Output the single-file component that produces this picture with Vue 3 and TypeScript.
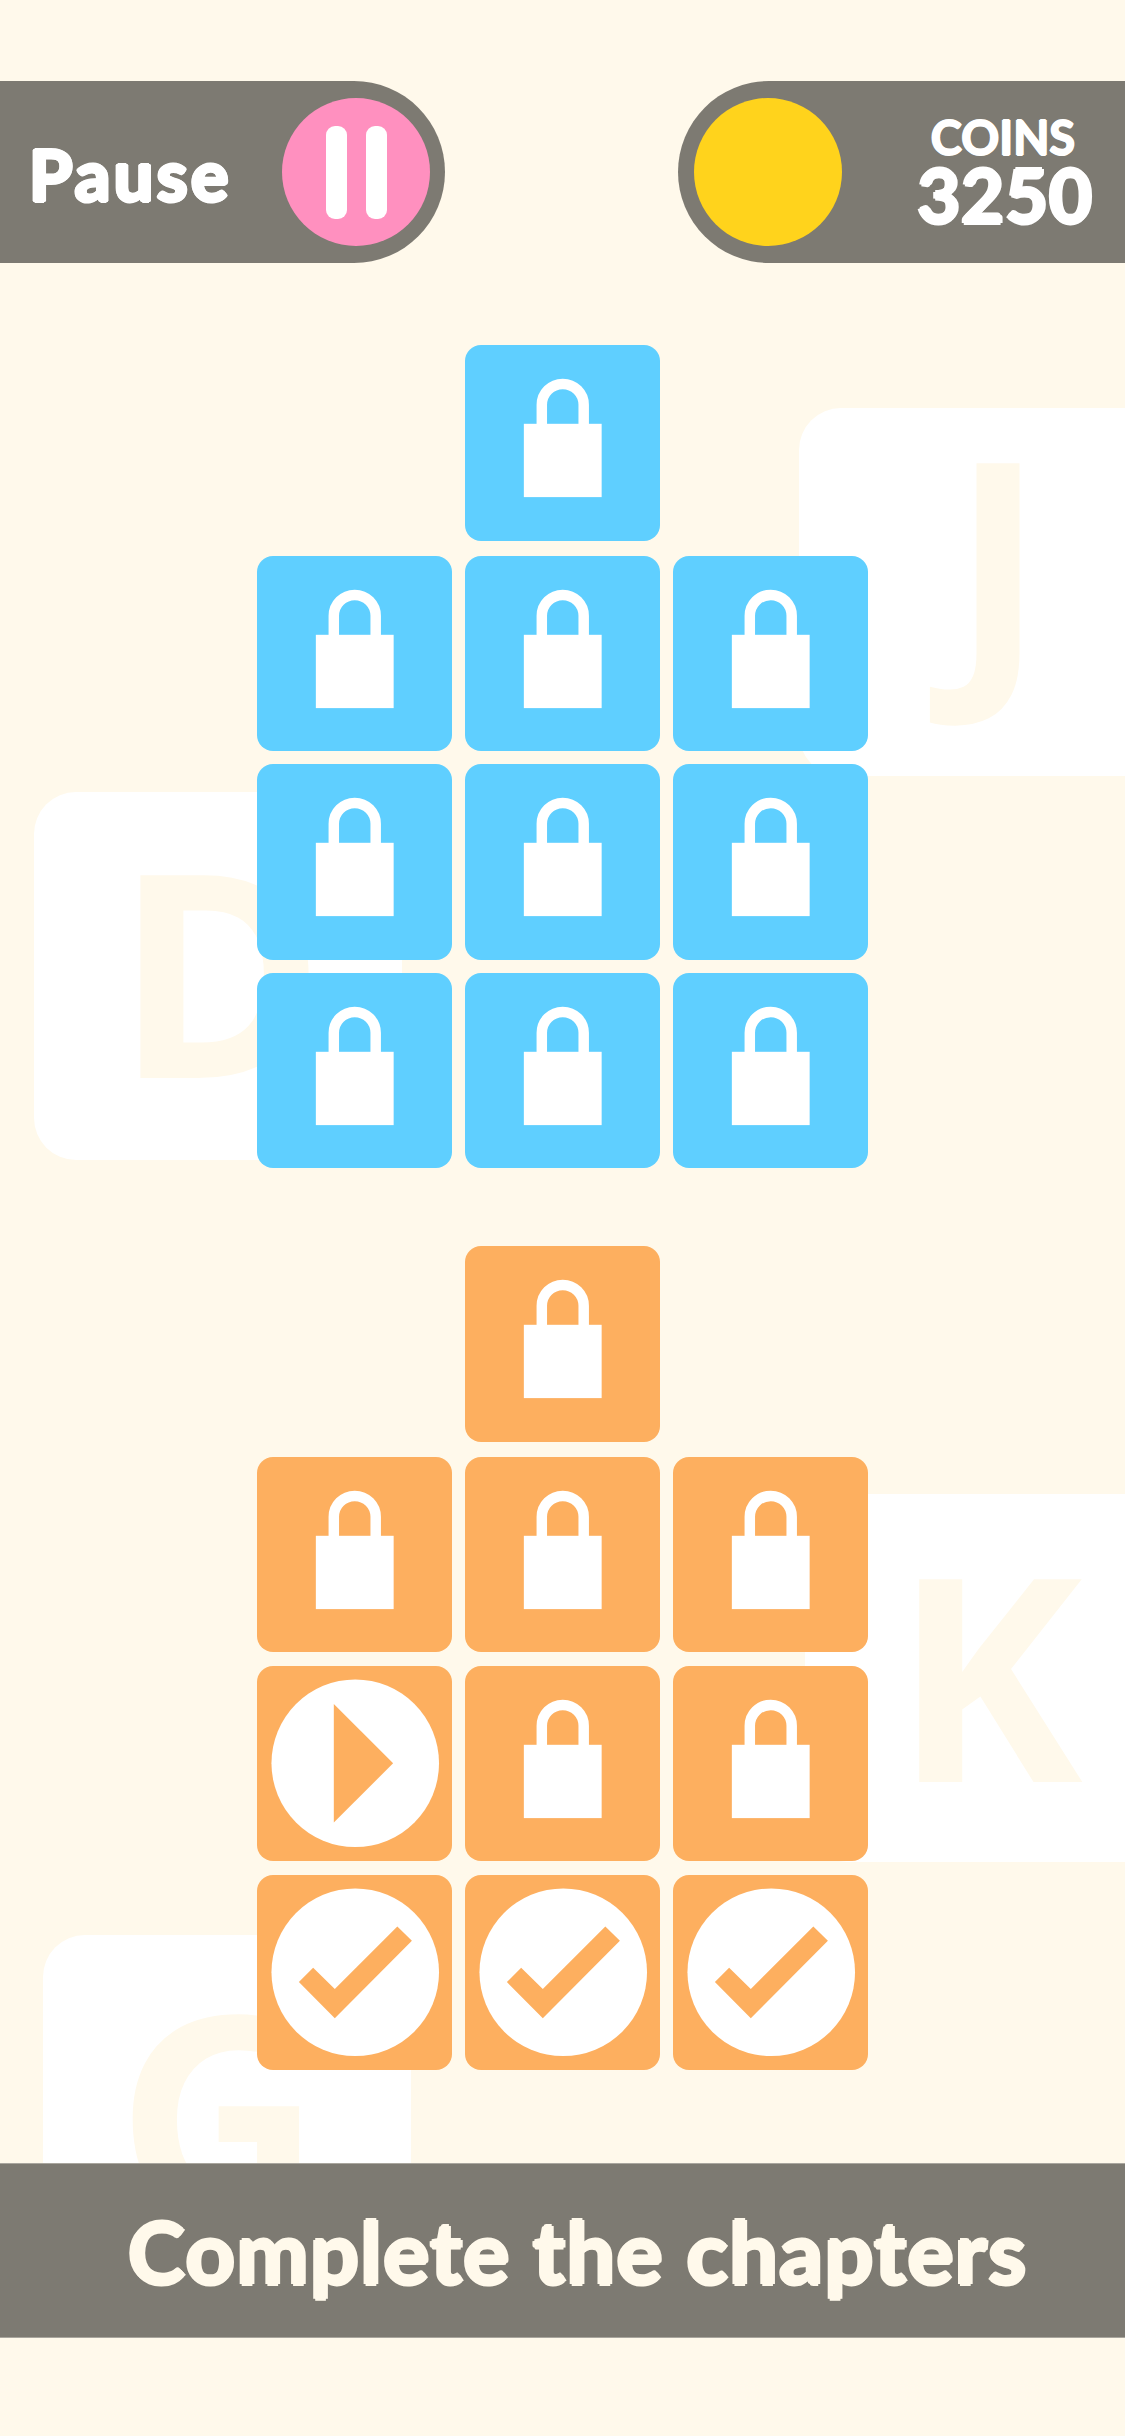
<script setup lang="ts">
type Tile = 'lock' | 'play' | 'check'
interface Chapter { color: string; top: Tile; tiles: Tile[] }

const chapters: Chapter[] = [
  { color: 'blue', top: 'lock', tiles: Array<Tile>(9).fill('lock') },
  {
    color: 'orange',
    top: 'lock',
    tiles: ['lock', 'lock', 'lock', 'play', 'lock', 'lock', 'check', 'check', 'check'],
  },
]

const ghosts = [
  { letter: 'J', cls: 'ghost-j' },
  { letter: 'D', cls: 'ghost-d' },
  { letter: 'K', cls: 'ghost-k' },
  { letter: 'G', cls: 'ghost-g' },
]

const rowsOf = (c: Chapter) => [{ list: [c.top], cls: 'head' }, { list: c.tiles, cls: 'grid' }]
</script>

<template>
  <div class="page">
    <div v-for="g in ghosts" :key="g.letter" class="ghost" :class="g.cls">
      <span>{{ g.letter }}</span>
    </div>

    <header class="topbar">
      <div class="pill pill-left">
        <span class="pause-label">Pause</span>
        <div class="disc disc-pink">
          <i class="pause-bar"></i>
          <i class="pause-bar"></i>
        </div>
      </div>
      <div class="pill pill-right">
        <div class="disc disc-yellow"></div>
        <div class="coins">
          <span class="coins-label">COINS</span>
          <span class="coins-value">3250</span>
        </div>
      </div>
    </header>

    <main class="chapters">
      <section v-for="c in chapters" :key="c.color" class="chapter" :class="'chapter-' + c.color">
        <div v-for="r in rowsOf(c)" :key="r.cls" :class="r.cls">
          <div v-for="(t, i) in r.list" :key="i" class="tile" :class="'tile-' + c.color">
            <svg viewBox="0 0 196 196" width="100%" height="100%">
              <template v-if="t === 'lock'">
                <path d="M77 85V60a21 21 0 0 1 42 0v25" fill="none" stroke="#fff" stroke-width="10.5" />
                <rect x="59" y="79" width="78" height="73.5" fill="#fff" />
              </template>
              <template v-else-if="t === 'play'">
                <circle cx="98.500" cy="97.500" r="84" fill="#fff" />
                <path class="mark" d="M77 38 136.500 97.500 77 157Z" />
              </template>
              <template v-else>
                <circle cx="98.500" cy="97.500" r="84" fill="#fff" />
                <path class="mark" d="M42 107.300 56.300 93 78 114.300 140.700 51.700 155.300 66 78 143.700Z" />
              </template>
            </svg>
          </div>
        </div>
      </section>
    </main>

    <footer class="banner">Complete the chapters</footer>
  </div>
</template>

<style>
html, body { margin: 0; background: #fff9eb; }
</style>

<style scoped>
.page {
  position: relative;
  width: 1125px;
  height: 2436px;
  overflow: hidden;
  background: #fff9eb;
  padding-top: 81px;
  box-sizing: border-box;
  font-family: Lato, "Noto Sans", sans-serif;
}

.ghost {
  position: absolute;
  width: 368px;
  height: 368px;
  background: #fff;
  border-radius: 42px;
  font-family: "Open Sans", "Noto Sans", sans-serif;
  font-weight: 700;
  font-size: 284px;
  line-height: 352px;
  color: #fff9eb;
  text-align: center;
}
.ghost span { position: relative; }
.ghost-j { left: 799px; top: 408px; }
.ghost-j span { left: 15px; top: -28px; }
.ghost-d { left: 34px; top: 792px; }
.ghost-d span { left: 2px; }
.ghost-k { left: 805px; top: 1494px; }
.ghost-k span { top: 2px; left: -1px; }
.ghost-g { left: 43px; top: 1935px; }
.ghost-g span { left: -8px; top: -1px; }

.topbar {
  position: relative;
  display: flex;
  justify-content: space-between;
}
.pill {
  height: 182px;
  background: #7d7a72;
  display: flex;
  align-items: center;
  box-sizing: border-box;
}
.pill-left {
  width: 445px;
  border-radius: 0 91px 91px 0;
  padding-left: 29px;
  padding-right: 15px;
  justify-content: space-between;
}
.pill-right {
  width: 447px;
  border-radius: 91px 0 0 91px;
  padding-left: 16px;
}
.disc {
  width: 148px;
  height: 148px;
  border-radius: 50%;
  display: flex;
  align-items: center;
  justify-content: center;
  gap: 19px;
}
.disc-pink { background: #ff90bf; }
.disc-yellow { background: #ffd31c; }
.pause-bar {
  width: 21px;
  height: 93px;
  background: #fff;
  border-radius: 9px;
}
.pause-label {
  font-size: 70px;
  font-weight: 700;
  color: #fff;
  letter-spacing: 3.500px;
  position: relative;
  top: 2px;
  text-shadow: 2px 0 #fff, -2px 0 #fff, 0 2px #fff, 0 -2px #fff,
    1.400px 1.400px #fff, -1.400px 1.400px #fff, 1.400px -1.400px #fff, -1.400px -1.400px #fff;
}
.coins {
  margin-left: 77px;
  width: 172px;
  display: flex;
  flex-direction: column;
  align-items: center;
  color: #fff;
  font-weight: 700;
  text-shadow: 1px 0 #fff, -1px 0 #fff, 0 1px #fff, 0 -1px #fff;
}
.coins-label { font-size: 47px; line-height: 40px; margin: 0 4px 6px 0; }
.coins-value {
  font-size: 74px;
  line-height: 64px;
  letter-spacing: 1px;
  text-shadow: 2px 0 #fff, -2px 0 #fff, 0 2px #fff, 0 -2px #fff;
}

.chapters {
  position: relative;
  margin-top: 82px;
  display: flex;
  flex-direction: column;
  gap: 78px;
}
.chapter {
  display: flex;
  flex-direction: column;
  align-items: center;
  gap: 15px;
}
.grid {
  display: grid;
  grid-template-columns: repeat(3, 195.500px);
  grid-auto-rows: 195.500px;
  column-gap: 12.500px;
  row-gap: 13.500px;
}
.chapter-blue .grid { row-gap: 13px; }
.head .tile { width: 195.500px; height: 195.500px; }
.tile { border-radius: 16px; }
.tile svg { display: block; }
.tile-blue { background: #5fcfff; }
.tile-orange { background: #fdaf5f; }
.mark { fill: #fdaf5f; }

.banner {
  position: relative;
  margin-top: 93px;
  height: 175px;
  background: #7d7a72;
  border-top: 1px solid #a9a69e;
  border-bottom: 1px solid #a9a69e;
  box-sizing: border-box;
  padding-left: 128px;
  display: flex;
  align-items: center;
  font-size: 86px;
  font-weight: 700;
  color: #fff9eb;
  letter-spacing: 1.500px;
  white-space: nowrap;
  text-shadow: 2px 0 #fff9eb, -2px 0 #fff9eb, 0 2px #fff9eb, 0 -2px #fff9eb;
}
</style>
